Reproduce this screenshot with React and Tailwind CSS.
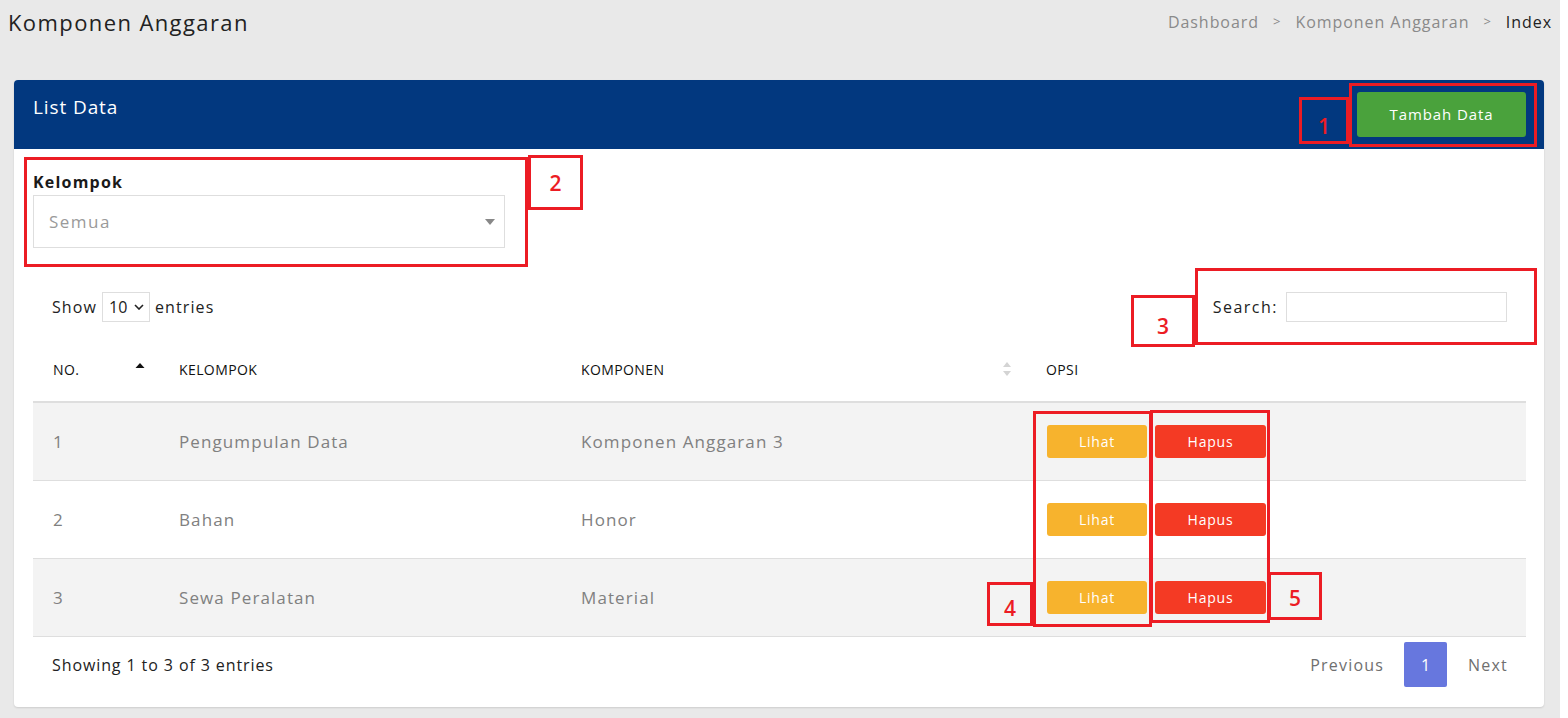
import React from 'react';

const rows = [
  { no: 1, kelompok: 'Pengumpulan Data', komponen: 'Komponen Anggaran 3', shade: true },
  { no: 2, kelompok: 'Bahan', komponen: 'Honor', shade: false },
  { no: 3, kelompok: 'Sewa Peralatan', komponen: 'Material', shade: true },
];

// kotak anotasi merah di atas screenshot
function Mark({ className, label, labelClass }) {
  return (
    <div className={`absolute border-[3px] border-[#ec1c24] ${className}`}>
      {label && (
        <span className={`absolute left-0 right-0 text-center text-[21px] font-semibold leading-none text-[#ec1c24] ${labelClass}`}>
          {label}
        </span>
      )}
    </div>
  );
}

function SortBoth() {
  return (
    <svg width="10" height="16" viewBox="0 0 10 16">
      <path d="M5 1 L9 6 L1 6 Z" fill="#d4d4d4" />
      <path d="M5 15 L9 10 L1 10 Z" fill="#d4d4d4" />
    </svg>
  );
}

function SortUp() {
  return (
    <svg width="10" height="8" viewBox="0 0 10 8">
      <path d="M5 1 L9.5 6 L0.5 6 Z" fill="#111" />
    </svg>
  );
}

export default function App() {
  return (
    <div className="relative flex w-full min-h-[718px] bg-white" style={{ fontFamily: '"Open Sans", "Liberation Sans", sans-serif' }}>
      <div className="w-[1560px] h-[718px] bg-[#e9e9e9] overflow-hidden">
        {/* Judul halaman + breadcrumb */}
        <div className="h-[44px] flex items-center justify-between pl-[8px] pr-[8px]">
          <h1 className="text-[22px] text-[#222] tracking-[1.4px]">Komponen Anggaran</h1>
          <nav className="flex items-center text-[16px] text-[#8a8a8a] tracking-[0.95px]">
            <span>Dashboard</span>
            <span className="px-[14px] text-[13px]">&gt;</span>
            <span>Komponen Anggaran</span>
            <span className="px-[14px] text-[13px]">&gt;</span>
            <span className="text-[#222]">Index</span>
          </nav>
        </div>

        {/* Card */}
        <div className="mt-[36px] ml-[14px] w-[1530px] h-[627px] bg-white rounded-[4px] shadow-[0_1px_2px_rgba(0,0,0,0.12)] overflow-hidden">
          <div className="h-[69px] bg-[#02387f] flex items-start justify-between pl-[19px] pr-[18px] pt-[12px]">
            <div className="text-[19px] leading-[28px] mt-[1px] text-white tracking-[0.9px]">List Data</div>
            <button className="w-[169px] h-[45px] bg-[#4aa23c] rounded-[3px] text-white text-[15px] font-medium tracking-[0.9px]">
              Tambah Data
            </button>
          </div>

          <div className="pl-[19px] pr-[18px]">
            {/* Filter kelompok */}
            <div className="pt-[22px]">
              <div className="text-[16px] leading-[22px] font-bold text-[#1a1a1a] tracking-[1.2px]">Kelompok</div>
              <div className="mt-[2px] w-[472px] h-[53px] border border-[#dedede] flex items-center justify-between pl-[15px] pr-[9px]">
                <span className="text-[17px] text-[#9a9a9a] tracking-[1.5px]">Semua</span>
                <svg width="10" height="6" viewBox="0 0 10 6"><path d="M0 0 L10 0 L5 6 Z" fill="#888" /></svg>
              </div>
            </div>

            {/* Show entries + search */}
            <div className="mt-[44px] h-[30px] flex items-center justify-between pl-[19px] pr-[19px] text-[16px] text-[#222] tracking-[1.1px]">
              <div className="flex items-center gap-[5px]">
                <span>Show</span>
                <div className="h-[30px] w-[48px] border border-[#dedede] flex items-center justify-between pl-[6px] pr-[5px] tracking-normal">
                  <span className="text-[16px]">10</span>
                  <svg width="10" height="6" viewBox="0 0 10 6"><path d="M1 1 L5 5 L9 1" stroke="#222" strokeWidth="1.6" fill="none" /></svg>
                </div>
                <span>entries</span>
              </div>
              <div className="flex items-center gap-[8px]">
                <span className="tracking-[1.5px]">Search:</span>
                <div className="w-[221px] h-[30px] border border-[#dedede]" />
              </div>
            </div>

            {/* Tabel */}
            <div className="mt-[19px]">
              <div className="grid grid-cols-[126px_402px_465px_500px] h-[62px] pb-[4px] items-center border-b-2 border-[#dedede] text-[14px] font-medium text-[#111] tracking-[0.4px]">
                <div className="pl-[20px] pr-[14px] flex items-center justify-between">
                  <span>NO.</span>
                  <span className="-mt-[6px]"><SortUp /></span>
                </div>
                <div className="pl-[20px]">KELOMPOK</div>
                <div className="pl-[20px] pr-[14px] flex items-center justify-between">
                  <span>KOMPONEN</span>
                  <SortBoth />
                </div>
                <div className="pl-[20px]">OPSI</div>
              </div>
              {rows.map((r) => (
                <div
                  key={r.no}
                  className={`grid grid-cols-[126px_402px_465px_500px] h-[78px] items-center border-b border-[#dedede] text-[17px] text-[#808080] tracking-[1.1px] ${r.shade ? 'bg-[#f3f3f3]' : 'bg-white'}`}
                >
                  <div className="pl-[20px]">{r.no}</div>
                  <div className="pl-[20px]">{r.kelompok}</div>
                  <div className="pl-[20px]">{r.komponen}</div>
                  <div className="pl-[21px] flex items-center gap-[8px] tracking-[0.8px]">
                    <button className="w-[100px] h-[33px] bg-[#f7b32d] rounded-[3px] text-white text-[14px] font-medium">Lihat</button>
                    <button className="w-[111px] h-[33px] bg-[#f43a24] rounded-[3px] text-white text-[14px] font-medium">Hapus</button>
                  </div>
                </div>
              ))}
            </div>

            {/* Footer tabel */}
            <div className="pt-[5px] flex items-start justify-between pl-[19px] pr-[18px]">
              <div className="h-[45px] flex items-center text-[16px] text-[#222] tracking-[0.9px]">Showing 1 to 3 of 3 entries</div>
              <div className="flex items-center text-[16px] text-[#6f6f6f] tracking-[1.2px]">
                <span className="pr-[20px]">Previous</span>
                <span className="w-[43px] h-[45px] bg-[#6777de] rounded-[2px] text-white flex items-center justify-center tracking-normal">1</span>
                <span className="pl-[21px]">Next</span>
              </div>
            </div>
          </div>
        </div>
      </div>

      {/* Anotasi */}
      <Mark className="left-[1299px] top-[97px] w-[50px] h-[47px]" label="1" labelClass="top-[16px]" />
      <Mark className="left-[1349px] top-[83px] w-[188px] h-[64px]" />
      <Mark className="left-[24px] top-[157px] w-[504px] h-[110px]" />
      <Mark className="left-[528px] top-[155px] w-[55px] h-[55px]" label="2" labelClass="top-[15px]" />
      <Mark className="left-[1131px] top-[295px] w-[64px] h-[52px]" label="3" labelClass="top-[18px]" />
      <Mark className="left-[1195px] top-[268px] w-[342px] h-[77px]" />
      <Mark className="left-[1033px] top-[411px] w-[119px] h-[216px]" />
      <Mark className="left-[987px] top-[582px] w-[46px] h-[44px]" label="4" labelClass="top-[13px]" />
      <Mark className="left-[1150px] top-[410px] w-[120px] h-[213px]" />
      <Mark className="left-[1268px] top-[572px] w-[54px] h-[48px]" label="5" labelClass="top-[13px]" />
    </div>
  );
}
